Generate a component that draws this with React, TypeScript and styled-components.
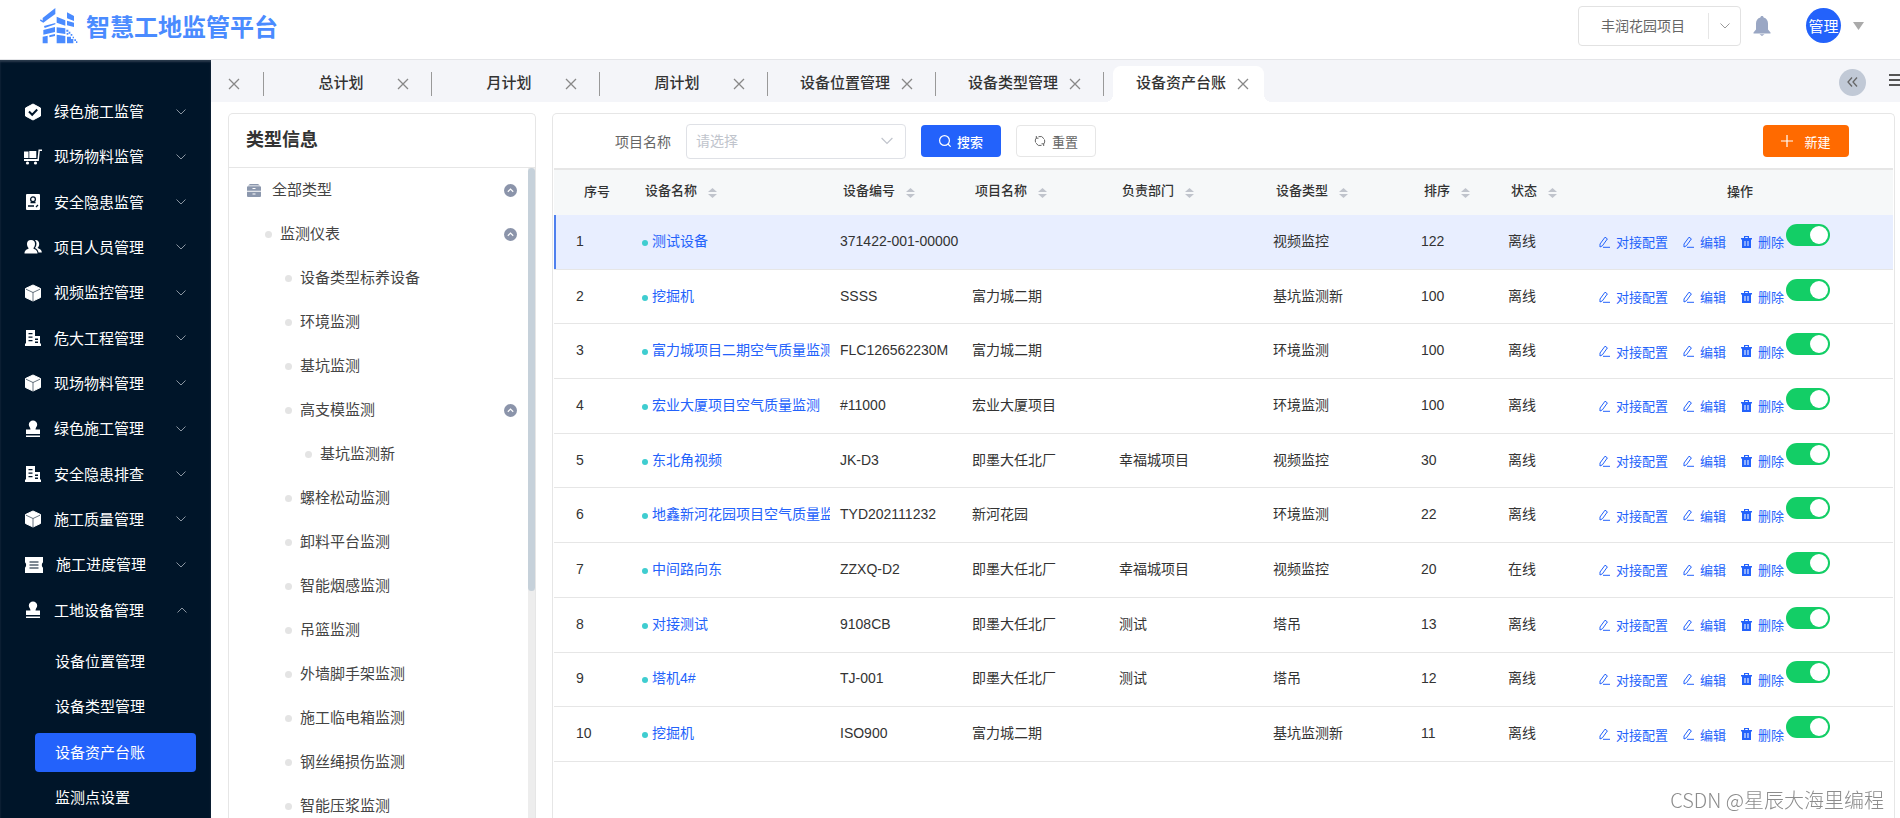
import React from "react";
import styled, { createGlobalStyle, css } from "styled-components";

const fontStack = '"Liberation Sans", "Noto Sans CJK SC", sans-serif';
const blue = "#2362fb";
const line = "#e6e6e6";

const GlobalStyle = createGlobalStyle`
  * { box-sizing: border-box; }
  body { margin: 0; font-family: ${fontStack}; font-size: 14px; color: #333; background: #fff; }
  button, select, input { font-family: inherit; font-size: inherit; color: inherit; }
  button { border: 0; background: none; padding: 0; cursor: pointer; }
  ul { list-style: none; margin: 0; padding: 0; }
  a { text-decoration: none; color: inherit; }
  svg { display: block; flex: none; }
`;

/* ---------- layout ---------- */
const Page = styled.div`
  display: flex;
  flex-direction: column;
  height: 100vh;
  overflow: hidden;
`;
const Header = styled.header`
  display: flex;
  align-items: center;
  justify-content: space-between;
  flex: none;
  height: 60px;
  padding: 0 36px 8px 40px;
  border-bottom: 1px solid #e4e5e8;
`;
const Body = styled.div`
  display: flex;
  flex: 1;
  min-height: 0;
`;
const Main = styled.main`
  display: flex;
  flex-direction: column;
  flex: 1;
  min-width: 0;
`;
const Content = styled.div`
  display: flex;
  flex: 1;
  min-height: 0;
  gap: 16px;
  padding: 11px 5px 0 17px;
`;

/* ---------- header ---------- */
const Brand = styled.a`
  display: flex;
  align-items: center;
  gap: 8px;
  color: #4a8bff;
`;
const BrandName = styled.span`
  padding-top: 4px;
  font-size: 24px;
  line-height: 32px;
  font-weight: 700;
`;
const HeaderTools = styled.div`
  display: flex;
  align-items: center;
`;
const ProjectPicker = styled.label`
  display: flex;
  align-items: center;
  width: 163px;
  height: 40px;
  border: 1px solid #e2e2e2;
  border-radius: 4px;
  color: #999;
`;
const ProjectSelect = styled.select`
  flex: 1;
  min-width: 0;
  height: 26px;
  padding: 0 0 0 22px;
  border: 0;
  border-right: 1px solid ${line};
  background: none;
  appearance: none;
  color: #666;
  outline: none;
`;
const PickerArrow = styled.span`
  display: flex;
  justify-content: center;
  width: 31px;
`;
const BellButton = styled.button`
  margin-left: 12px;
`;
const Avatar = styled.button`
  width: 35px;
  height: 35px;
  margin: 0 12px 0 35px;
  border-radius: 50%;
  background: ${blue};
  color: #fff;
  font-size: 15px;
  white-space: nowrap;
`;

/* ---------- sidebar ---------- */
const Sidebar = styled.nav`
  flex: none;
  width: 211px;
  padding-top: 29px;
  background: #001529;
  color: #fff;
  font-size: 15px;
  box-shadow: inset 0 2px 2px #2a3a4c;
  overflow: hidden;
`;
const MenuList = styled.ul`
  display: grid;
  grid-auto-rows: 1fr;
  height: 544px;
`;
const MenuButton = styled.button`
  display: flex;
  align-items: center;
  width: 100%;
  height: 45px;
  padding: 0 24px;
  text-align: left;
`;
const MenuIcon = styled.span`
  margin-right: 12px;
`;
const MenuText = styled.span`
  flex: 1;
  padding-top: 1px;
  line-height: 22px;
`;
const MenuArrow = styled.span<{ $open?: boolean }>`
  color: #8a95a1;
  padding-right: 1px;
  ${(p) => p.$open && css`transform: rotate(180deg);`}
`;
const SubList = styled.ul`
  display: grid;
  grid-auto-rows: 1fr;
  align-items: center;
  height: 181px;
  margin-top: 6px;
  padding: 0 15px 0 35px;
`;
const SubLink = styled.a<{ $active?: boolean }>`
  display: block;
  height: 39px;
  padding-left: 20px;
  border-radius: 4px;
  line-height: 39px;
  ${(p) => p.$active && css`background: ${blue};`}
`;

/* ---------- tabs ---------- */
const TabBar = styled.div`
  display: flex;
  justify-content: space-between;
  align-items: flex-end;
  flex: none;
  height: 42px;
  background: #f4f5f9;
  overflow: hidden;
`;
const TabList = styled.div`
  display: flex;
  align-items: flex-end;
`;
const FirstClose = styled.div`
  display: flex;
  align-items: center;
  width: 52px;
  height: 36px;
  padding-left: 17px;
`;
const Tab = styled.div`
  display: flex;
  align-items: center;
  flex: none;
  width: 168px;
  height: 36px;
  &::before {
    content: "";
    flex: none;
    width: 1px;
    height: 24px;
    margin-right: 9px;
    background: #999;
  }
`;
const TabInner = styled.div<{ $active?: boolean }>`
  position: relative;
  display: flex;
  align-items: center;
  flex: none;
  width: 151px;
  height: 36px;
  padding: 0 0 2px 8px;
  border-radius: 8px 8px 0 0;
  ${(p) =>
    p.$active &&
    css`
      background: #fff;
      &::before,
      &::after {
        content: "";
        position: absolute;
        bottom: 0;
        width: 8px;
        height: 8px;
      }
      &::before {
        left: -8px;
        background: radial-gradient(circle at 0 0, transparent 8px, #fff 8px);
      }
      &::after {
        right: -8px;
        background: radial-gradient(circle at 100% 0, transparent 8px, #fff 8px);
      }
    `}
`;
const TabLabel = styled.button`
  width: 120px;
  font-size: 15px;
  font-weight: 500;
  text-align: center;
  white-space: nowrap;
  line-height: 22px;
`;
const CloseButton = styled.button`
  color: #888;
  margin-left: -4px;
  padding: 2px 0 0;
`;
const TabTools = styled.div`
  display: flex;
  align-items: center;
  height: 40px;
  gap: 23px;
`;
const CollapseTabs = styled.button`
  display: grid;
  place-items: center;
  width: 27px;
  height: 27px;
  border-radius: 50%;
  background: #c1c9d6;
  color: #666;
`;
const TabsMenu = styled.button`
  width: 11px;
  overflow: hidden;
  margin-bottom: 4px;
`;

/* ---------- type tree ---------- */
const Panel = styled.section`
  display: flex;
  flex-direction: column;
  min-width: 0;
  border: 1px solid ${line};
  border-bottom: 0;
  border-radius: 5px 5px 0 0;
`;
const TypePanel = styled(Panel)`
  flex: none;
  width: 308px;
`;
const PanelTitle = styled.h2`
  flex: none;
  height: 54px;
  margin: 0;
  padding-left: 17px;
  border-bottom: 1px solid ${line};
  font-size: 18px;
  font-weight: 700;
  line-height: 52px;
`;
const TreeWrap = styled.div`
  display: flex;
  flex: 1;
  min-height: 0;
`;
const Tree = styled.ul`
  flex: 1;
  overflow: hidden;
  color: #444;
  font-size: 15px;
`;
const TreeRow = styled.li<{ $level: number }>`
  display: flex;
  align-items: center;
  height: 44px;
  padding-right: 11px;
  padding-left: ${(p) => (p.$level === 0 ? 18 : 16 + p.$level * 20)}px;
`;
const Dot = styled.span`
  width: 7px;
  height: 7px;
  margin-right: 8px;
  border-radius: 50%;
  background: #e4e4e4;
`;
const TreeText = styled.span`
  flex: 1;
  line-height: 22px;
`;
const RootIcon = styled.span`
  margin-right: 11px;
`;
const ScrollTrack = styled.div`
  width: 7px;
  background: #ededed;
`;
const ScrollThumb = styled.div`
  height: 65%;
  border-radius: 4px;
  background: #c6d1da;
`;

/* ---------- device table ---------- */
const TablePanel = styled(Panel)`
  flex: 1;
`;
const Toolbar = styled.form`
  display: flex;
  align-items: center;
  flex: none;
  height: 54px;
  padding: 0 45px 0 62px;
  color: #666;
`;
const FilterField = styled.label`
  display: flex;
  align-items: center;
  gap: 15px;
  margin-right: 15px;
`;
const SelectBox = styled.span`
  display: flex;
  align-items: center;
  width: 220px;
  height: 35px;
  padding-right: 12px;
  border: 1px solid #dfe1e6;
  border-radius: 4px;
  color: #c0c4cc;
`;
const FilterSelect = styled.select`
  flex: 1;
  height: 33px;
  padding: 0 9px;
  border: 0;
  background: none;
  appearance: none;
  outline: none;
`;
const ToolButton = styled.button<{ $kind: "primary" | "plain" | "create" }>`
  display: flex;
  align-items: center;
  justify-content: center;
  gap: ${(p) => (p.$kind === "create" ? 11 : 6)}px;
  width: ${(p) => (p.$kind === "create" ? 86 : 80)}px;
  height: 32px;
  border-radius: 4px;
  font-size: 13px;
  ${(p) =>
    p.$kind === "primary" &&
    css`
      margin-right: 15px;
      background: ${blue};
      color: #fff;
      font-weight: 500;
    `}
  ${(p) => p.$kind === "plain" && css`border: 1px solid ${line};`}
  ${(p) =>
    p.$kind === "create" &&
    css`
      margin-left: auto;
      background: #ff6a00;
      color: #fff;
    `}
`;
const Table = styled.table`
  width: calc(100% - 2px);
  height: 594px;
  margin-left: 1px;
  border-collapse: separate;
  border-spacing: 0;
  table-layout: fixed;
`;
const Th = styled.th<{ $align?: string; $pad?: number }>`
  height: 47px;
  padding: 0 0 4px ${(p) => p.$pad ?? 13}px;
  border-top: 2px solid ${line};
  background: #f6f8f9;
  font-size: 13px;
  font-weight: 500;
  text-align: ${(p) => p.$align ?? "left"};
`;
const SortButton = styled.button`
  display: flex;
  align-items: center;
  gap: 11px;
  font-weight: 500;
  line-height: 20px;
`;
const SortCarets = styled.span`
  padding-top: 4px;
`;
const Tr = styled.tr<{ $current?: boolean }>`
  ${(p) =>
    p.$current &&
    css`
      background: #e8eeff;
      td:first-child {
        box-shadow: inset 2px 0 #4f80ee;
      }
    `}
`;
const Td = styled.td<{ $pad?: number }>`
  padding: 0 0 2px ${(p) => p.$pad ?? 10}px;
  border-bottom: 1px solid ${line};
  line-height: 20px;
  white-space: nowrap;
  overflow: hidden;
`;
const ActionTd = styled(Td)`
  padding: 0 0 0 12px;
`;
const NameLink = styled.a`
  color: ${blue};
  &::before {
    content: "";
    display: inline-block;
    width: 6px;
    height: 6px;
    margin-right: 4px;
    border-radius: 50%;
    background: #3fcdd0;
  }
`;
const Actions = styled.div`
  display: flex;
  height: 36px;
  color: ${blue};
  font-size: 13px;
`;
const ActionButton = styled.button`
  display: flex;
  align-items: center;
  gap: 6px;
  height: 36px;
  margin-right: 15px;
  &:last-of-type {
    margin-right: 2px;
  }
`;
const Switch = styled.input`
  width: 44px;
  height: 22px;
  margin: 0;
  border-radius: 11px;
  appearance: none;
  background: #13ce66;
  &::before {
    content: "";
    display: block;
    width: 18px;
    height: 18px;
    margin: 2px 2px 2px 24px;
    border-radius: 50%;
    background: #fff;
  }
`;
const Watermark = styled.div`
  position: fixed;
  right: 16px;
  bottom: 4px;
  color: #8c8c8c;
  font-family: "Noto Sans CJK SC", sans-serif;
  font-size: 20px;
  font-weight: 300;
  line-height: 28px;
`;

/* ---------- icons ---------- */
const Logo = () => (
  <svg width="38" height="36" viewBox="0 0 114 108" fill="#4a8bff">
    <path d="M8 30 46 0v18L22 35 10 44 0 38l2-4 6 4zM81 13l21 11v15L81 31zM50 26l26 11v16L50 44zM81 38l21 6v13l-21-5zM12 54l34-9v4L14 60zM10 66l35-9v15l-35 8zM50 58l26 3v17l-26-4zM8 86l15-3v23H8zM28 82l17-4v6l-17 4zM50 80l26 4v22H50zM81 86h12v7h7v13H81zM79 65h6v6h-6zM86 71h5v6h-5zM80 75h5v5h-5zM92 78h5v5h-5zM98 86h4v5h-4zM103 94h5v5h-5zM108 100h4v5h-4z" />
  </svg>
);
const Chevron = ({ w = 10 }: { w?: number }) => (
  <svg width={w} height={w} viewBox="0 0 10 10" fill="none" stroke="currentColor">
    <path d="M.5 2.500 5 7l4.500-4.500" />
  </svg>
);
const Cross = () => (
  <svg width="12" height="12" viewBox="0 0 12 12" fill="none" stroke="#888" strokeWidth="1.300">
    <path d="m1 1 10 10M11 1 1 11" />
  </svg>
);
const Pencil = () => (
  <svg width="11" height="12" viewBox="0 0 11 12" fill="none" stroke="currentColor">
    <path d="M1 8 6 1.200l2.400 1.700L3.400 9.800 1 11zM4 11.300h7" />
  </svg>
);
const Trash = () => (
  <svg width="11" height="12" viewBox="0 0 11 12" fill="currentColor">
    <path fillRule="evenodd" d="M3 0h5v2h3v1.500h-1V12H1V3.500H0V2h3zM4.200 1v1h2.600V1zM3.500 5v5h1V5zM6.500 5v5h1V5z" />
  </svg>
);
const UpCircle = () => (
  <svg width="13" height="13" viewBox="0 0 13 13">
    <circle cx="6.500" cy="6.500" r="6.500" fill="#8b94aa" />
    <path d="m3.800 7.700 2.700-2.600 2.700 2.600" fill="none" stroke="#fff" strokeWidth="1.200" />
  </svg>
);
const Carets = () => (
  <svg width="9" height="10" viewBox="0 0 9 10" fill="#c0c4cc">
    <path d="M4.500 0 9 4H0zM0 6h9l-4.500 4z" />
  </svg>
);
const dark = "#001529";
const menuIcons: Record<string, React.ReactNode> = {
  hex: (
    <svg width="18" height="18" viewBox="0 0 18 18">
      <path d="M9 1 16.500 5v8L9 17 1.500 13V5z" fill="#fff" stroke="#fff" strokeLinejoin="round" />
      <path d="m5 8.500 3.200 3.200 5-5.200" fill="none" stroke={dark} strokeWidth="2" />
    </svg>
  ),
  cart: (
    <svg width="18" height="18" viewBox="0 0 18 18" fill="#fff">
      <path d="M0 3.500h4.500V10H0zM5.300 3h7v7h-7zM0 11h13.500l1-9.500H18V3h-2.200l-1 10H0z" />
      <circle cx="3.500" cy="15" r="1.600" />
      <circle cx="11.500" cy="15" r="1.600" />
    </svg>
  ),
  doc: (
    <svg width="18" height="18" viewBox="0 0 18 18">
      <rect x="2" y="1" width="14" height="16" rx="1" fill="#fff" />
      <g fill="none" stroke={dark} strokeWidth="1.300">
        <circle cx="9" cy="6.300" r="2.400" />
        <path d="M6.500 9.500h5M4 13h6M12 14l2-2" />
      </g>
    </svg>
  ),
  users: (
    <svg width="18" height="18" viewBox="0 0 18 18" fill="#fff">
      <path d="M7 2a4 4 0 0 1 4 4c0 2-.8 3.300-1.800 4.200C11 11.500 13.500 12 13.500 15.500H.5c0-3.500 2.500-4 4.300-5.300C3.800 9.300 3 8 3 6a4 4 0 0 1 4-4z" />
      <path d="M11.500 2c2.500 0 3.700 2 3.700 4 0 1.800-.7 3-1.700 4 2 1 4.300 1.500 4.300 4.500h-3.300c-.3-2.500-1.700-3.300-3.500-4.500C13 7.500 13 4 11 2.300z" />
    </svg>
  ),
  cube: (
    <svg width="18" height="18" viewBox="0 0 18 18">
      <path d="M9 1 16.500 4.500v9L9 17 1.500 13.500v-9z" fill="#fff" stroke="#fff" strokeLinejoin="round" />
      <path d="m2 5.200 7 3.300 7-3.300M9 8.500V17" fill="none" stroke={dark} strokeWidth=".6" />
    </svg>
  ),
  building: (
    <svg width="18" height="18" viewBox="0 0 18 18" fill="#fff">
      <path fillRule="evenodd" d="M2 1h9v6h5v7.500h1V17H1v-2.500h1zM4.500 4v1.300h4V4zM4.500 7.500v1.300h4V7.500zM4.500 11v1.300h4V11zM11 9.500V11h3V9.500zM11 12.500V14h3v-1.500z" />
    </svg>
  ),
  stamp: (
    <svg width="18" height="18" viewBox="0 0 18 18" fill="#fff">
      <path d="M9 .5a4.200 4.200 0 0 1 4.200 4.200c0 1.900-1.700 2.800-1.700 4.800h4.500V14H2V9.500h4.500c0-2-1.700-2.900-1.700-4.800A4.200 4.200 0 0 1 9 .5zM2 15.500h14V17H2z" />
    </svg>
  ),
  ticket: (
    <svg width="20" height="18" viewBox="0 0 20 18">
      <path d="M1 1h18v5.500c-1.500.5-1.500 4.500 0 5V17H1v-5.500c1.500-.5 1.500-4.500 0-5z" fill="#fff" />
      <path d="M5.500 6h9M5.500 9h9M5.500 12h9" stroke={dark} />
    </svg>
  ),
};

/* ---------- data ---------- */
const menu: [string, string][] = [
  ["hex", "绿色施工监管"],
  ["cart", "现场物料监管"],
  ["doc", "安全隐患监管"],
  ["users", "项目人员管理"],
  ["cube", "视频监控管理"],
  ["building", "危大工程管理"],
  ["cube", "现场物料管理"],
  ["stamp", "绿色施工管理"],
  ["building", "安全隐患排查"],
  ["cube", "施工质量管理"],
  ["ticket", "施工进度管理"],
  ["stamp", "工地设备管理"],
];
const subMenu = ["设备位置管理", "设备类型管理", "设备资产台账", "监测点设置"];
const tabs = ["总计划", "月计划", "周计划", "设备位置管理", "设备类型管理", "设备资产台账"];
const activePage = "设备资产台账";
const tree: [number, string, boolean?][] = [
  [0, "全部类型", true],
  [1, "监测仪表", true],
  [2, "设备类型标养设备"],
  [2, "环境监测"],
  [2, "基坑监测"],
  [2, "高支模监测", true],
  [3, "基坑监测新"],
  [2, "螺栓松动监测"],
  [2, "卸料平台监测"],
  [2, "智能烟感监测"],
  [2, "吊篮监测"],
  [2, "外墙脚手架监测"],
  [2, "施工临电箱监测"],
  [2, "钢丝绳损伤监测"],
  [2, "智能压浆监测"],
];
const sortable = ["设备名称", "设备编号", "项目名称", "负责部门", "设备类型", "排序", "状态"];
const columnWidths = [78, 198, 132, 147, 154, 148, 87, 89];
const rows = [
  ["测试设备", "371422-001-00000", "", "", "视频监控", "122", "离线"],
  ["挖掘机", "SSSS", "富力城二期", "", "基坑监测新", "100", "离线"],
  ["富力城项目二期空气质量监测", "FLC126562230M", "富力城二期", "", "环境监测", "100", "离线"],
  ["宏业大厦项目空气质量监测", "#11000", "宏业大厦项目", "", "环境监测", "100", "离线"],
  ["东北角视频", "JK-D3", "即墨大任北厂", "幸福城项目", "视频监控", "30", "离线"],
  ["地鑫新河花园项目空气质量监测", "TYD202111232", "新河花园", "", "环境监测", "22", "离线"],
  ["中间路向东", "ZZXQ-D2", "即墨大任北厂", "幸福城项目", "视频监控", "20", "在线"],
  ["对接测试", "9108CB", "即墨大任北厂", "测试", "塔吊", "13", "离线"],
  ["塔机4#", "TJ-001", "即墨大任北厂", "测试", "塔吊", "12", "离线"],
  ["挖掘机", "ISO900", "富力城二期", "", "基坑监测新", "11", "离线"],
];

const TopHeader = () => (
  <Header>
    <Brand href="#">
      <Logo />
      <BrandName>智慧工地监管平台</BrandName>
    </Brand>
    <HeaderTools>
      <ProjectPicker>
        <ProjectSelect aria-label="当前项目">
          <option>丰润花园项目</option>
        </ProjectSelect>
        <PickerArrow>
          <Chevron />
        </PickerArrow>
      </ProjectPicker>
      <BellButton aria-label="通知">
        <svg width="18" height="20" viewBox="0 0 18 20" fill="#9aa7c4">
          <path d="M9 0c1 0 1.600.7 1.600 1.500C13.500 2.200 15 4.600 15 7.500v6l2.500 3v1H.5v-1l2.500-3v-6c0-2.900 1.500-5.300 4.400-6C7.400.7 8 0 9 0zM6.500 18.300h5L9 20z" />
        </svg>
      </BellButton>
      <Avatar>管理</Avatar>
      <svg width="11" height="8" viewBox="0 0 11 8" fill="#aaa">
        <path d="M0 0h11L5.500 8z" />
      </svg>
    </HeaderTools>
  </Header>
);

const SideMenu = () => (
  <Sidebar>
    <MenuList>
      {menu.map(([icon, text], i) => (
        <li key={text}>
          <MenuButton>
            <MenuIcon>{menuIcons[icon]}</MenuIcon>
            <MenuText>{text}</MenuText>
            <MenuArrow $open={i === menu.length - 1}>
              <Chevron />
            </MenuArrow>
          </MenuButton>
        </li>
      ))}
    </MenuList>
    <SubList>
      {subMenu.map((text) => (
        <li key={text}>
          <SubLink href="#" $active={text === activePage}>
            {text}
          </SubLink>
        </li>
      ))}
    </SubList>
  </Sidebar>
);

const PageTabs = () => (
  <TabBar>
    <TabList>
      <FirstClose>
        <button aria-label="关闭">
          <Cross />
        </button>
      </FirstClose>
      {tabs.map((name) => (
        <Tab key={name}>
          <TabInner $active={name === activePage}>
            <TabLabel>{name}</TabLabel>
            <CloseButton aria-label={`关闭${name}`}>
              <Cross />
            </CloseButton>
          </TabInner>
        </Tab>
      ))}
    </TabList>
    <TabTools>
      <CollapseTabs aria-label="收起">
        <svg width="11" height="10" viewBox="0 0 11 10" fill="none" stroke="currentColor" strokeWidth="1.300">
          <path d="M5 .5 1 5l4 4.500M10 .5 6 5l4 4.500" />
        </svg>
      </CollapseTabs>
      <TabsMenu aria-label="标签菜单">
        <svg width="16" height="12" viewBox="0 0 16 12" fill="#555">
          <path d="M0 0h16v2H0zM0 5h16v2H0zM0 10h16v2H0z" />
        </svg>
      </TabsMenu>
    </TabTools>
  </TabBar>
);

const TypeTree = () => (
  <TypePanel>
    <PanelTitle>类型信息</PanelTitle>
    <TreeWrap>
      <Tree>
        {tree.map(([level, text, open]) => (
          <TreeRow key={text} $level={level}>
            {level === 0 ? (
              <RootIcon>
                <svg width="14" height="13" viewBox="0 0 14 13" fill="#8b97ad">
                  <path fillRule="evenodd" d="M3 0h8l2 1.500H1zM1 2.300h12a1 1 0 0 1 1 1v3.400H0V3.300a1 1 0 0 1 1-1zM5.500 4v1h3V4zM0 7.700h14V12a1 1 0 0 1-1 1H1a1 1 0 0 1-1-1zM5.500 9.500v1h3v-1z" />
                </svg>
              </RootIcon>
            ) : (
              <Dot />
            )}
            <TreeText>{text}</TreeText>
            {open && (
              <button aria-label={`收起${text}`}>
                <UpCircle />
              </button>
            )}
          </TreeRow>
        ))}
      </Tree>
      <ScrollTrack>
        <ScrollThumb />
      </ScrollTrack>
    </TreeWrap>
  </TypePanel>
);

const DeviceTable = () => (
  <TablePanel>
    <Toolbar onSubmit={(e) => e.preventDefault()}>
      <FilterField>
        项目名称
        <SelectBox>
          <FilterSelect>
            <option>请选择</option>
          </FilterSelect>
          <Chevron w={12} />
        </SelectBox>
      </FilterField>
      <ToolButton $kind="primary">
        <svg width="12" height="12" viewBox="0 0 12 12" fill="none" stroke="currentColor" strokeWidth="1.200">
          <circle cx="5.500" cy="5.500" r="4.900" />
          <path d="m9 9 2.700 2.700" />
        </svg>
        搜索
      </ToolButton>
      <ToolButton $kind="plain" type="reset">
        <svg width="12" height="12" viewBox="0 0 12 12" fill="none" stroke="currentColor">
          <path d="M1.500 7.500A4.700 4.700 0 0 1 2.500 2.700M4.500 1.600A4.700 4.700 0 0 1 10 3.800M10.500 4.500A4.700 4.700 0 0 1 9.500 9.300M7.500 10.400A4.700 4.700 0 0 1 2 8.200M2.300 1v2.200h2.200M9.700 11V8.800H7.500" />
        </svg>
        重置
      </ToolButton>
      <ToolButton $kind="create" type="button">
        <svg width="12" height="12" viewBox="0 0 12 12" stroke="currentColor" strokeWidth="1.200">
          <path d="M6 0v12M0 6h12" />
        </svg>
        新建
      </ToolButton>
    </Toolbar>
    <Table>
      <colgroup>
        {columnWidths.map((w, i) => (
          <col key={i} width={w} />
        ))}
        <col />
      </colgroup>
      <thead>
        <tr>
          <Th $pad={30}>序号</Th>
          {sortable.map((name) => (
            <Th key={name}>
              <SortButton>
                {name}
                <SortCarets>
                  <Carets />
                </SortCarets>
              </SortButton>
            </Th>
          ))}
          <Th $align="center" $pad={0}>
            操作
          </Th>
        </tr>
      </thead>
      <tbody>
        {rows.map(([name, ...cells], i) => (
          <Tr key={i} $current={i === 0}>
            <Td $pad={22}>{i + 1}</Td>
            <Td>
              <NameLink href="#">{name}</NameLink>
            </Td>
            {cells.map((cell, j) => (
              <Td key={j}>{cell}</Td>
            ))}
            <ActionTd>
              <Actions>
                <ActionButton>
                  <Pencil />
                  对接配置
                </ActionButton>
                <ActionButton>
                  <Pencil />
                  编辑
                </ActionButton>
                <ActionButton>
                  <Trash />
                  删除
                </ActionButton>
                <Switch type="checkbox" role="switch" defaultChecked aria-label={`启用${name}`} />
              </Actions>
            </ActionTd>
          </Tr>
        ))}
      </tbody>
    </Table>
  </TablePanel>
);

export default function App() {
  return (
    <Page>
      <GlobalStyle />
      <TopHeader />
      <Body>
        <SideMenu />
        <Main>
          <PageTabs />
          <Content>
            <TypeTree />
            <DeviceTable />
          </Content>
        </Main>
      </Body>
      <Watermark>CSDN @星辰大海里编程</Watermark>
    </Page>
  );
}
